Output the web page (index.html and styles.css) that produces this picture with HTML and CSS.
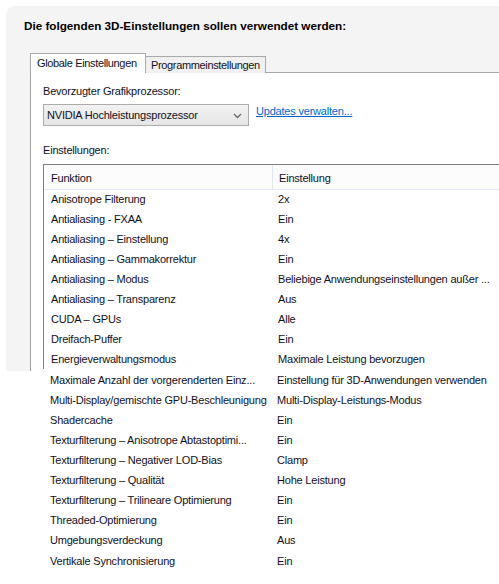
FILE: index.html
```html
<!DOCTYPE html>
<html lang="de">
<head>
<meta charset="utf-8">
<link rel="stylesheet" href="styles.css">
</head>
<body>
<div class="window">
  <div class="title">Die folgenden 3D-Einstellungen sollen verwendet werden:</div>
  <div class="tabs">
    <div class="tab active">Globale Einstellungen</div>
    <div class="tab">Programmeinstellungen</div>
    <div class="tab-rest"></div>
  </div>
  <div class="panel">
    <div class="label">Bevorzugter Grafikprozessor:</div>
    <div class="gpu-row">
      <div class="select">
        <span>NVIDIA Hochleistungsprozessor</span>
        <svg class="chev" width="9" height="6" viewBox="0 0 9 6"><path d="M1 1 L4.5 4.5 L8 1" fill="none" stroke="#6a6a6a" stroke-width="1.3"/></svg>
      </div>
      <a class="link" href="#">Updates verwalten...</a>
    </div>
    <div class="label settings-label">Einstellungen:</div>
    <div class="table">
      <div class="head">
        <div class="c1">Funktion</div>
        <div class="c2 hdiv">Einstellung</div>
      </div>
      <div class="row"><div class="c1">Anisotrope Filterung</div><div class="c2">2x</div></div>
      <div class="row"><div class="c1">Antialiasing - FXAA</div><div class="c2">Ein</div></div>
      <div class="row"><div class="c1">Antialiasing – Einstellung</div><div class="c2">4x</div></div>
      <div class="row"><div class="c1">Antialiasing – Gammakorrektur</div><div class="c2">Ein</div></div>
      <div class="row"><div class="c1">Antialiasing – Modus</div><div class="c2">Beliebige Anwendungseinstellungen außer ...</div></div>
      <div class="row"><div class="c1">Antialiasing – Transparenz</div><div class="c2">Aus</div></div>
      <div class="row"><div class="c1">CUDA – GPUs</div><div class="c2">Alle</div></div>
      <div class="row"><div class="c1">Dreifach-Puffer</div><div class="c2">Ein</div></div>
      <div class="row"><div class="c1">Energieverwaltungsmodus</div><div class="c2">Maximale Leistung bevorzugen</div></div>
    </div>
  </div>
</div>
<div class="more">
  <div class="row"><div class="c1">Maximale Anzahl der vorgerenderten Einz...</div><div class="c2">Einstellung für 3D-Anwendungen verwenden</div></div>
  <div class="row"><div class="c1">Multi-Display/gemischte GPU-Beschleunigung</div><div class="c2">Multi-Display-Leistungs-Modus</div></div>
  <div class="row"><div class="c1">Shadercache</div><div class="c2">Ein</div></div>
  <div class="row"><div class="c1">Texturfilterung – Anisotrope Abtastoptimi...</div><div class="c2">Ein</div></div>
  <div class="row"><div class="c1">Texturfilterung – Negativer LOD-Bias</div><div class="c2">Clamp</div></div>
  <div class="row"><div class="c1">Texturfilterung – Qualität</div><div class="c2">Hohe Leistung</div></div>
  <div class="row"><div class="c1">Texturfilterung – Trilineare Optimierung</div><div class="c2">Ein</div></div>
  <div class="row"><div class="c1">Threaded-Optimierung</div><div class="c2">Ein</div></div>
  <div class="row"><div class="c1">Umgebungsverdeckung</div><div class="c2">Aus</div></div>
  <div class="row last"><div class="c1">Vertikale Synchronisierung</div><div class="c2">Ein</div></div>
</div>
</body>
</html>
```

FILE: styles.css
```css
* { box-sizing: border-box; }
html, body { margin: 0; padding: 0; background: #ffffff; }
body {
  width: 499px;
  height: 584px;
  overflow: hidden;
  font-family: "Liberation Sans", Arial, sans-serif;
  font-size: 11px;
  letter-spacing: -0.2px;
  color: #10101c;
}
.window {
  margin: 6px 0 0 6px;
  height: 365px;
  background: #f4f4f4;
  border-top-left-radius: 9px;
  overflow: hidden;
  display: flex;
  flex-direction: column;
}
.title {
  font-weight: bold;
  font-size: 11.7px;
  letter-spacing: 0;
  color: #000;
  padding: 13px 0 0 18px;
  height: 47px;
}
.tabs {
  display: flex;
  align-items: flex-end;
  margin-left: 24px;
  height: 20px;
}
.tab {
  height: 17px;
  padding: 2px 0 0 5px;
  width: 120px;
  background: #f0f0f0;
  border: 1px solid #a9a9a9;
  border-bottom: none;
  border-left: none;
  letter-spacing: -0.35px;
  white-space: nowrap;
  overflow: hidden;
}
.tab.active {
  height: 20px;
  width: 116px;
  padding: 3px 0 0 6px;
  background: #ffffff;
  border-left: 1px solid #a9a9a9;
}
.tab-rest {
  flex: 1;
  border-bottom: 1px solid #a9a9a9;
}
.panel {
  flex: 1;
  margin-left: 24px;
  background: #ffffff;
  border-left: 1px solid #a0a0a0;
  padding: 12px 0 0 12px;
}
.label { height: 12px; line-height: 12px; }
.gpu-row {
  display: flex;
  align-items: center;
  margin-top: 7px;
}
.select {
  width: 206px;
  height: 22px;
  border: 1px solid #acacac;
  background: linear-gradient(#f2f2f2, #e5e5e5);
  display: flex;
  align-items: center;
  justify-content: space-between;
  padding: 0 6px 0 3px;
}
.chev { margin-top: 1px; }
.link {
  margin-left: 7px;
  color: #0066cc;
  text-decoration: underline;
  margin-top: -8px;
}
.settings-label { margin-top: 18px; }
.table {
  margin-top: 8px;
  border-top: 1px solid #7f7f7f;
  border-left: 1px solid #7f7f7f;
}
.head {
  display: flex;
  height: 25px;
  align-items: center;
  background: #fcfcfc;
  border-bottom: 1px solid #e3ebfa;
}
.head .c1 { padding-top: 1px; }
.row {
  display: flex;
  height: 20px;
  align-items: center;
  white-space: nowrap;
}
.c1 {
  width: 228px;
  padding-left: 7px;
  overflow: hidden;
}
.c2 {
  flex: 1;
  padding-left: 6px;
  overflow: hidden;
}
.hdiv {
  height: 25px;
  line-height: 26px;
  border-left: 1px solid #e3e8f0;
}
.head + .row { margin-top: -1px; }
.more {
  padding-left: 43px;
  margin-top: -1px;
}
.more .c1 { width: 227px; padding-left: 7px; }
.more .c2 { padding-left: 7px; }
.more .row.last { height: 21px; padding-top: 1px; }
```
